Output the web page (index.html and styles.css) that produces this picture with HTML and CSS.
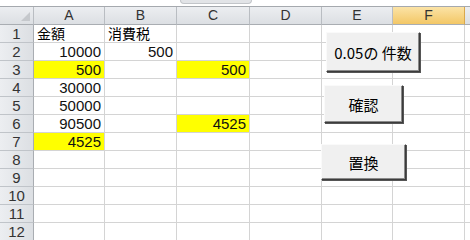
FILE: index.html
```html
<!DOCTYPE html>
<html lang="ja">
<head>
    <meta charset="UTF-8">
    <title>Sheet1</title>
    <link rel="stylesheet" href="styles.css">
</head>
<body>
<div class="sheet">
    <div class="topbar"><div class="tab-edge"></div></div>

    <div class="grid">
        <div class="hd corner"><span class="tri"></span></div>
        <div class="hd">A</div>
        <div class="hd">B</div>
        <div class="hd">C</div>
        <div class="hd">D</div>
        <div class="hd">E</div>
        <div class="hd sel">F</div>
        <div class="hd"></div>

        <div class="rn">1</div><div class="c jp">金額</div><div class="c jp">消費税</div><div class="c"></div><div class="c"></div><div class="c"></div><div class="c"></div><div class="c"></div>
        <div class="rn">2</div><div class="c num">10000</div><div class="c num">500</div><div class="c"></div><div class="c"></div><div class="c"></div><div class="c"></div><div class="c"></div>
        <div class="rn">3</div><div class="c num yl">500</div><div class="c"></div><div class="c num yl">500</div><div class="c"></div><div class="c"></div><div class="c"></div><div class="c"></div>
        <div class="rn">4</div><div class="c num">30000</div><div class="c"></div><div class="c"></div><div class="c"></div><div class="c"></div><div class="c"></div><div class="c"></div>
        <div class="rn">5</div><div class="c num">50000</div><div class="c"></div><div class="c"></div><div class="c"></div><div class="c"></div><div class="c"></div><div class="c"></div>
        <div class="rn">6</div><div class="c num">90500</div><div class="c"></div><div class="c num yl">4525</div><div class="c"></div><div class="c"></div><div class="c"></div><div class="c"></div>
        <div class="rn">7</div><div class="c num yl">4525</div><div class="c"></div><div class="c"></div><div class="c"></div><div class="c"></div><div class="c"></div><div class="c"></div>
        <div class="rn">8</div><div class="c"></div><div class="c"></div><div class="c"></div><div class="c"></div><div class="c"></div><div class="c"></div><div class="c"></div>
        <div class="rn">9</div><div class="c"></div><div class="c"></div><div class="c"></div><div class="c"></div><div class="c"></div><div class="c"></div><div class="c"></div>
        <div class="rn">10</div><div class="c"></div><div class="c"></div><div class="c"></div><div class="c"></div><div class="c"></div><div class="c"></div><div class="c"></div>
        <div class="rn">11</div><div class="c"></div><div class="c"></div><div class="c"></div><div class="c"></div><div class="c"></div><div class="c"></div><div class="c"></div>
        <div class="rn">12</div><div class="c"></div><div class="c"></div><div class="c"></div><div class="c"></div><div class="c"></div><div class="c"></div><div class="c"></div>
    </div>

    <!-- botones de formulario encima de la hoja -->
    <button class="btn btn-count">0.05の 件数</button>
    <button class="btn btn-check">確認</button>
    <button class="btn btn-replace">置換</button>
</div>
</body>
</html>
```

FILE: styles.css
```css
body {
    margin: 0;
    padding: 0;
    background-color: white;
    font-family: "Noto Sans CJK JP", "Liberation Sans", sans-serif;
    color: black;
}

.sheet {
    position: relative;
    width: 470px;
    height: 240px;
    overflow: hidden;
}

.topbar {
    height: 6px;
    border-bottom: 1px solid #a5a9ae;
    background-color: white;
    position: relative;
}

.tab-edge {
    position: absolute;
    left: 180px;
    top: 0;
    width: 70px;
    height: 3px;
    background-color: #e2e4e7;
    border: 1px solid #c2c5c9;
    border-top: none;
    border-radius: 0 0 6px 6px;
}

.grid {
    display: grid;
    grid-template-columns: 34px 71px 72px 73px 72px 71px 72px 1fr;
    grid-auto-rows: 18px;
}

.grid > div {
    box-sizing: border-box;
    border-right: 1px solid #d4d4d4;
    border-bottom: 1px solid #d4d4d4;
    font-size: 15px;
    line-height: 17px;
    white-space: nowrap;
}

.hd {
    background: linear-gradient(#eceef1, #dcdfe3);
    border-right-color: #b9bdc2 !important;
    border-bottom-color: #a9adb2 !important;
    text-align: center;
    color: #333;
    font-family: "Liberation Sans", sans-serif;
    font-size: 14px !important;
}

.hd.sel {
    background: linear-gradient(#fbe3a6, #f3c766);
    border-right-color: #d9a84c !important;
}

.corner {
    position: relative;
}

.tri {
    position: absolute;
    right: 3px;
    bottom: 3px;
    width: 0;
    height: 0;
    border-left: 9px solid transparent;
    border-bottom: 9px solid #c5c8cc;
}

.rn {
    background: linear-gradient(90deg, #eceef1, #dcdfe3);
    border-right-color: #a9adb2 !important;
    border-bottom-color: #c0c4c9 !important;
    text-align: center;
    color: #333;
    font-family: "Liberation Sans", sans-serif;
}

.c {
    padding: 0 3px;
}

.jp {
    font-size: 14px !important;
}

.num {
    text-align: right;
    font-family: "Liberation Sans", sans-serif;
    color: #111;
}

.yl {
    background-color: #ffff00;
}

.btn {
    position: absolute;
    box-sizing: border-box;
    margin: 0;
    padding: 0;
    background-color: #f0f0f0;
    border: 1px solid;
    border-color: #fafafa #3c3c3c #3c3c3c #fafafa;
    box-shadow: inset -1px -1px 0 #8a8a8a, 1px 1px 0 #555;
    font-family: "Noto Sans CJK JP", sans-serif;
    font-size: 15px;
    color: black;
    cursor: pointer;
}

.btn-count {
    left: 326px;
    top: 32px;
    width: 94px;
    height: 40px;
}

.btn-check {
    left: 324px;
    top: 85px;
    width: 79px;
    height: 38px;
}

.btn-replace {
    left: 321px;
    top: 144px;
    width: 85px;
    height: 36px;
}
```
